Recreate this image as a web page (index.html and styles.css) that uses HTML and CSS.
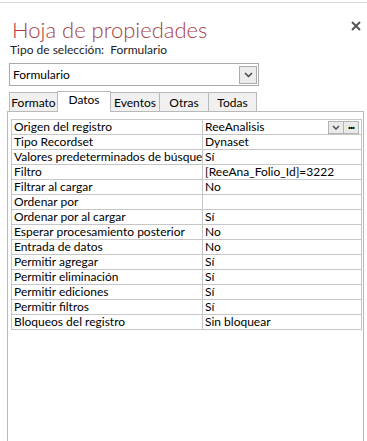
FILE: index.html
```html
<!DOCTYPE html>
<html>
<head>
    <title>Hoja de propiedades</title>
    <link rel="stylesheet" href="styles.css">
</head>
<body>
    <div class="topline"></div>
    <div class="header">
        <h1 class="title">Hoja de propiedades</h1>
        <span class="close">
            <svg width="10" height="10" viewBox="0 0 10 10"><path d="M1 1 L9 9 M9 1 L1 9" stroke="#555" stroke-width="2"/></svg>
        </span>
    </div>
    <p class="selection">Tipo de selección:&nbsp; Formulario</p>

    <div class="combo">
        <span class="combo-text">Formulario</span>
        <span class="combo-btn">
            <svg width="9" height="6" viewBox="0 0 9 6"><path d="M1 1 L4.5 4.5 L8 1" fill="none" stroke="#444" stroke-width="1.5"/></svg>
        </span>
    </div>

    <div class="tabs">
        <span class="tab tab-formato">Formato</span>
        <span class="tab tab-datos active">Datos</span>
        <span class="tab tab-eventos">Eventos</span>
        <span class="tab tab-otras">Otras</span>
        <span class="tab tab-todas">Todas</span>
    </div>

    <div class="panel">
        <table class="props">
            <tr>
                <td class="name">Origen del registro</td>
                <td class="value">
                    <div class="value-row">
                        <span>ReeAnalisis</span>
                        <span class="btns">
                            <span class="mini-btn"><svg width="8" height="5" viewBox="0 0 8 5"><path d="M1 1 L4 4 L7 1" fill="none" stroke="#444" stroke-width="1.4"/></svg></span>
                            <span class="mini-btn dots">&middot;&middot;&middot;</span>
                        </span>
                    </div>
                </td>
            </tr>
            <tr><td class="name">Tipo Recordset</td><td class="value">Dynaset</td></tr>
            <tr><td class="name">Valores predeterminados de búsque</td><td class="value">Sí</td></tr>
            <tr><td class="name">Filtro</td><td class="value">[ReeAna_Folio_Id]=3222</td></tr>
            <tr><td class="name">Filtrar al cargar</td><td class="value">No</td></tr>
            <tr><td class="name">Ordenar por</td><td class="value"></td></tr>
            <tr><td class="name">Ordenar por al cargar</td><td class="value">Sí</td></tr>
            <tr><td class="name">Esperar procesamiento posterior</td><td class="value">No</td></tr>
            <tr><td class="name">Entrada de datos</td><td class="value">No</td></tr>
            <tr><td class="name">Permitir agregar</td><td class="value">Sí</td></tr>
            <tr><td class="name">Permitir eliminación</td><td class="value">Sí</td></tr>
            <tr><td class="name">Permitir ediciones</td><td class="value">Sí</td></tr>
            <tr><td class="name">Permitir filtros</td><td class="value">Sí</td></tr>
            <tr><td class="name">Bloqueos del registro</td><td class="value">Sin bloquear</td></tr>
        </table>
    </div>
</body>
</html>
```

FILE: styles.css
```css
html, body {
    margin: 0;
    height: 100%;
    background: #fff;
    font-family: Lato, "Noto Sans", sans-serif;
    font-size: 12px;
    color: #000;
}

body {
    display: flex;
    flex-direction: column;
    overflow: hidden;
}

/* thin line across the top of the pane */
.topline {
    margin-top: 2px;
    height: 1px;
    background: #d9d9d9;
}

.header {
    display: flex;
    justify-content: space-between;
    align-items: flex-start;
    padding: 0 6px 0 12px;
}

.title {
    margin: 12px 0 0 0;
    font-family: Lato, sans-serif;
    font-weight: 300;
    font-size: 22px;
    line-height: 29px;
    color: #a9403f;
}

.close {
    margin-top: 18px;
    width: 10px;
    height: 10px;
}

.close svg {
    display: block;
}

.selection {
    margin: -2px 0 0 10px;
    line-height: 16px;
    color: #222;
}

/* combo box */
.combo {
    box-sizing: border-box;
    margin: 5px 0 0 9px;
    width: 250px;
    height: 23px;
    border: 1px solid #ababab;
    display: flex;
    align-items: center;
    justify-content: space-between;
}

.combo-text {
    padding-left: 3px;
}

.combo-btn {
    box-sizing: border-box;
    width: 18px;
    height: 18px;
    margin-right: 1px;
    border: 1px solid #acacac;
    background: #ececec;
    display: flex;
    align-items: center;
    justify-content: center;
}

/* tabs */
.tabs {
    display: flex;
    align-items: flex-end;
    margin: 4px 0 0 9px;
    height: 21px;
    position: relative;
    z-index: 1;
}

.tab {
    box-sizing: border-box;
    height: 19px;
    border: 1px solid #b9b9b9;
    border-bottom: none;
    background: #f0f0f0;
    text-align: center;
    line-height: 19px;
    margin-left: -1px;
}

.tab:first-child {
    margin-left: 0;
}

.tab.active {
    height: 21px;
    background: #fff;
    line-height: 16px;
    position: relative;
    top: 1px;
}

.tab-formato { width: 49px; }
.tab-datos { width: 54px; }
.tab-eventos { width: 50px; }
.tab-otras { width: 50px; }
.tab-todas { width: 49px; }

/* panel with the property grid */
.panel {
    flex: 1;
    margin: 0 3px 0 7px;
    border: 1px solid #b9b9b9;
    border-bottom: none;
    padding: 7px 2px 0 3px;
}

.props {
    border-collapse: collapse;
    width: 351px;
    table-layout: fixed;
}

.props td {
    border: 1px solid #c6c6c6;
    height: 14px;
    padding: 0 0 0 2px;
    line-height: 14px;
    white-space: nowrap;
    overflow: hidden;
}

.props td.name {
    width: 188px;
}

.value-row {
    display: flex;
    justify-content: space-between;
    align-items: center;
}

.btns {
    display: flex;
    margin-right: 2px;
}

.mini-btn {
    box-sizing: border-box;
    width: 16px;
    height: 13px;
    border: 1px solid #b4b4b4;
    background: #eaeaea;
    display: flex;
    align-items: center;
    justify-content: center;
    font-weight: bold;
    font-size: 11px;
    line-height: 8px;
}

.mini-btn.dots {
    margin-left: -1px;
    letter-spacing: -1px;
}
```
